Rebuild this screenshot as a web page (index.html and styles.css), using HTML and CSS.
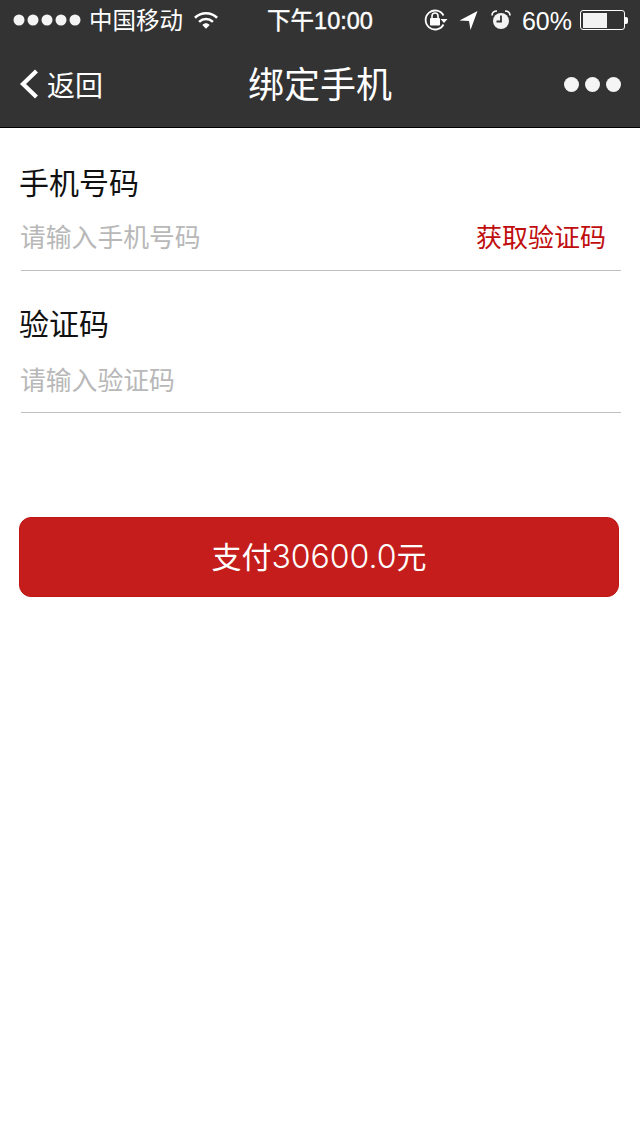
FILE: index.html
```html
<!DOCTYPE html>
<html lang="zh-CN">
<head>
<meta charset="utf-8">
<title>绑定手机</title>
<link rel="stylesheet" href="styles.css">
</head>
<body>
<header class="header">
  <div class="status">
    <div class="status-left">
      <svg class="signal" width="68" height="12" viewBox="0 0 68 12"><circle cx="6" cy="6" r="5.500"/><circle cx="20" cy="6" r="5.500"/><circle cx="34" cy="6" r="5.500"/><circle cx="48" cy="6" r="5.500"/><circle cx="62" cy="6" r="5.500"/></svg>
      <span class="carrier">中国移动</span>
      <svg class="wifi" width="24" height="20" viewBox="0 0 26 20"><path d="M1 7.500C8 1 18 1 25 7.500" fill="none" stroke="#fff" stroke-width="2.800"/><path d="M5.500 12C10 8 16 8 20.500 12" fill="none" stroke="#fff" stroke-width="2.800"/><path d="M9 15.500C11.500 13 14.500 13 17 15.500L13 19.500Z" fill="#fff"/></svg>
    </div>
    <div class="time">下午10:00</div>
    <div class="status-right">
      <svg class="lock" width="24" height="22" viewBox="0 0 24 22"><path d="M19.500 6.500A9.500 9.500 0 1 0 19.500 15.500" fill="none" stroke="#fff" stroke-width="1.800"/><path d="M16.500 10h7l-3.500 4z" fill="#fff"/><rect x="6" y="9" width="10" height="7.500" rx="1" fill="#fff"/><path d="M8 9V7a3 3 0 0 1 6 0v2" fill="none" stroke="#fff" stroke-width="1.600"/></svg>
      <svg class="loc" width="19" height="20" viewBox="0 0 19 20"><path d="M18.500 1L0.500 10.500L10 11L11.500 20Z" fill="#fff"/></svg>
      <svg width="20" height="20" viewBox="0 0 20 20"><circle cx="10" cy="11" r="8" fill="#f4f4f4"/><path d="M10 5.500V11.500H5.500" fill="none" stroke="#333" stroke-width="1.800"/><path d="M1 5.500C1 2.500 3 1 6 1M19 5.500C19 2.500 17 1 14 1" fill="none" stroke="#fff" stroke-width="1.600"/></svg>
      <span class="percent">60%</span>
      <div class="battery"><div class="battery-body"><div class="battery-fill"></div></div><div class="battery-tip"></div></div>
    </div>
  </div>
  <nav class="nav">
    <div class="back">
      <svg width="22" height="32" viewBox="0 0 22 32"><path d="M17.500 3L4 16L17.500 29" fill="none" stroke="#fff" stroke-width="4.200"/></svg>
      <span>返回</span>
    </div>
    <h1 class="title">绑定手机</h1>
    <div class="dots"><i></i><i></i><i></i></div>
  </nav>
</header>
<main class="form">
  <section class="field">
    <div class="label">手机号码</div>
    <div class="input-row">
      <span class="placeholder">请输入手机号码</span>
      <span class="get-code">获取验证码</span>
    </div>
  </section>
  <section class="field">
    <div class="label">验证码</div>
    <div class="input-row">
      <span class="placeholder">请输入验证码</span>
    </div>
  </section>
  <button class="pay" type="button">支付<span class="amount">30600.0</span>元</button>
</main>
</body>
</html>
```
FILE: styles.css
```css
* { box-sizing: border-box; }
html, body { margin: 0; padding: 0; }
body {
  width: 640px;
  height: 1136px;
  background: #fff;
  overflow: hidden;
  font-family: "Liberation Sans", "Noto Sans CJK SC", sans-serif;
}
.header {
  height: 128px;
  background: #333333;
  border-bottom: 1px solid #000;
  color: #fff;
}
.status {
  height: 40px;
  display: grid;
  grid-template-columns: 1fr auto 1fr;
  align-items: center;
  padding: 0 13px;
}
.status-left, .status-right { display: flex; align-items: center; }
.signal { fill: #f4f4f4; margin-right: 8px; }
.carrier { font-size: 23.500px; line-height: 28px; width: 94px; margin-top: 2px; }
.wifi { margin-left: 11px; }
.time { font-size: 23.500px; line-height: 28px; margin-top: 2px; -webkit-text-stroke: 0.4px #fff; }
.status-right { justify-content: flex-end; gap: 9px; margin-right: -1px; }
.lock { margin-right: 2px; }
.loc { margin-right: 4px; }
.percent { font-size: 25px; line-height: 28px; margin-left: 2px; margin-top: 1px; }
.battery { display: flex; align-items: center; margin-left: -1px; }
.battery-body { width: 45px; height: 20px; border: 1.500px solid #fff; border-radius: 3px; padding: 1.500px; }
.battery-fill { width: 60%; height: 100%; background: #f2f2f2; }
.battery-tip { width: 3px; height: 7px; background: #fff; border-radius: 0 2px 2px 0; }
.nav {
  height: 87px;
  display: grid;
  grid-template-columns: 1fr auto 1fr;
  align-items: center;
  padding: 0 19px;
}
.back { display: flex; align-items: center; font-size: 28px; gap: 6px; }
.title { margin: 4px 0 0; font-size: 36px; font-weight: 400; line-height: 44px; }
.dots { display: flex; justify-content: flex-end; gap: 6px; margin-top: 2px; }
.dots i { width: 15px; height: 15px; border-radius: 50%; background: #f5f5f5; }
.form { padding: 0 19px 0 21px; }
.field { height: 142px; display: flex; flex-direction: column; }
.field:first-child { height: 143px; }
.label { margin: 37px 0 0 -2px; font-size: 30px; line-height: 34px; color: #111; }
.field:first-child .label { margin-top: 39px; }
.input-row {
  display: flex;
  justify-content: space-between;
  align-items: center;
  height: 71px;
  border-bottom: 1px solid #c0c0c0;
  padding-right: 15px;
}
.field:last-of-type .input-row { height: 72px; }
.placeholder { font-size: 25.800px; color: #b8b8b8; margin-left: -1px; }
.field:last-of-type .placeholder { margin-top: 2px; }
.get-code { font-size: 26px; color: #c00d0d; }
.pay {
  display: block;
  width: 600px;
  height: 80px;
  margin: 104px 0 0 -2px;
  background: #c41d1b;
  border: 1px solid #c01716;
  border-radius: 12px;
  color: #fff;
  font-family: inherit;
  font-size: 30px;
  line-height: 36px;
  padding: 0;
}
.amount { font-family: "Inter", sans-serif; font-size: 32px; font-weight: 300; }
```
